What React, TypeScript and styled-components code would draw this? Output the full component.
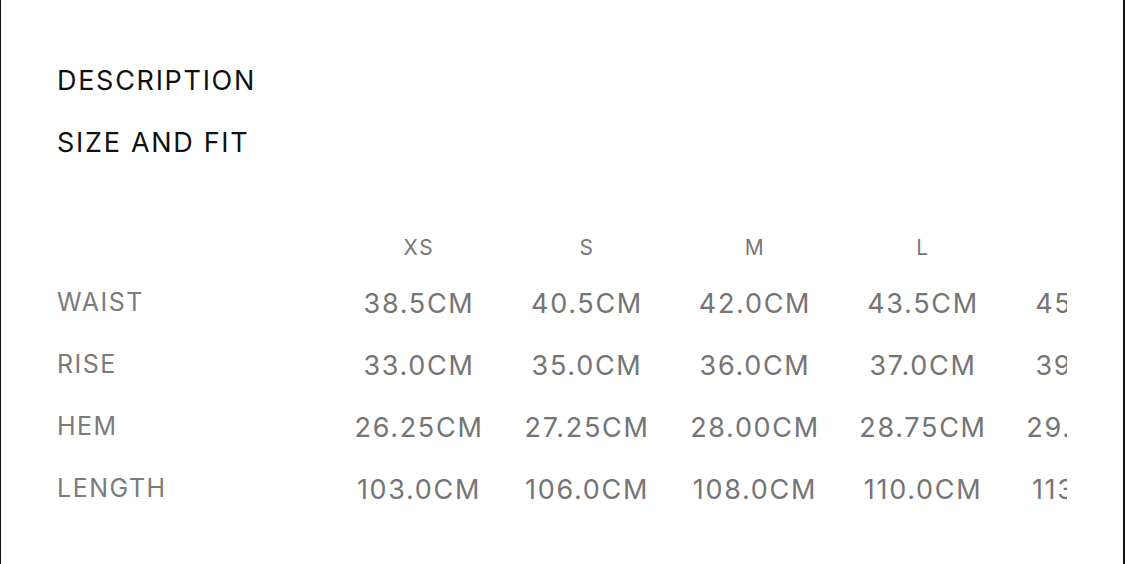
import React from 'react';
import styled, { createGlobalStyle } from 'styled-components';

const GlobalStyle = createGlobalStyle`
    html, body {
        margin: 0;
        padding: 0;
        background: #ffffff;
    }
    body {
        font-family: Inter, "Noto Sans", "Liberation Sans", sans-serif;
    }
`;

const Page = styled.div`
    box-sizing: border-box;
    height: 564px;
    overflow: hidden;
    border-left: 1px solid #111;
    border-right: 2px solid #111;
    padding: 50px 56px 0 56px;
    background: #fff;
`;

const SectionTitle = styled.div`
    font-size: 27px;
    line-height: 62px;
    letter-spacing: 1.7px;
    color: #111;
    font-weight: 400;
`;

const TableScroll = styled.div`
    margin-top: 51px;
    width: 100%;
    overflow: hidden;
`;

const SizeGrid = styled.div`
    display: grid;
    grid-template-columns: 278px repeat(5, 168px);
    width: max-content;
`;

const HeadCell = styled.div`
    font-size: 21px;
    line-height: 46px;
    letter-spacing: 1.6px;
    color: #777;
    text-align: center;
`;

const RowLabel = styled.div`
    font-size: 25px;
    line-height: 62px;
    letter-spacing: 1.5px;
    color: #7b7b7b;
    white-space: nowrap;
`;

const ValueCell = styled.div`
    font-size: 27px;
    line-height: 59px;
    padding-top: 3px;
    letter-spacing: 1.7px;
    color: #757575;
    text-align: center;
    white-space: nowrap;
`;

const sizes = ['XS', 'S', 'M', 'L', 'XL'];

const rows: { label: string; values: string[] }[] = [
    { label: 'WAIST', values: ['38.5CM', '40.5CM', '42.0CM', '43.5CM', '45.0CM'] },
    { label: 'RISE', values: ['33.0CM', '35.0CM', '36.0CM', '37.0CM', '39.0CM'] },
    { label: 'HEM', values: ['26.25CM', '27.25CM', '28.00CM', '28.75CM', '29.50CM'] },
    { label: 'LENGTH', values: ['103.0CM', '106.0CM', '108.0CM', '110.0CM', '113.0CM'] },
];

export default function App() {
    return (
        <>
            <GlobalStyle />
            <Page>
                <SectionTitle>DESCRIPTION</SectionTitle>
                <SectionTitle>SIZE AND FIT</SectionTitle>
                <TableScroll>
                    <SizeGrid>
                        <HeadCell />
                        {sizes.map((s) => (
                            <HeadCell key={s}>{s}</HeadCell>
                        ))}
                        {rows.map((row) => (
                            <React.Fragment key={row.label}>
                                <RowLabel>{row.label}</RowLabel>
                                {row.values.map((v, i) => (
                                    <ValueCell key={i}>{v}</ValueCell>
                                ))}
                            </React.Fragment>
                        ))}
                    </SizeGrid>
                </TableScroll>
            </Page>
        </>
    );
}
